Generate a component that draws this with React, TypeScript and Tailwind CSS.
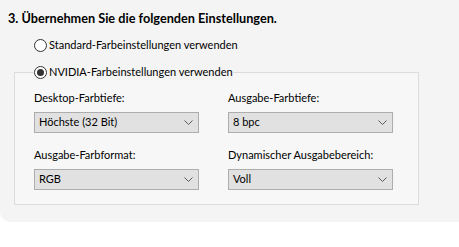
const font = { fontFamily: 'Lato, "Noto Sans", Arial, sans-serif' };

function Chevron() {
  return (
    <svg width="9" height="5" viewBox="0 0 9 5" className="shrink-0">
      <path d="M0.5 0.5 L4.5 4.5 L8.5 0.5" fill="none" stroke="#5a5a5a" strokeWidth="1" />
    </svg>
  );
}

function Select({ value }: { value: string }) {
  return (
    <div className="h-[21px] w-[165px] flex items-center justify-between pl-[4px] pr-[5px] bg-[#e1e1e1] border border-[#adadad] text-[11px] text-black">
      <span>{value}</span>
      <Chevron />
    </div>
  );
}

function Radio({ checked, label }: { checked?: boolean; label: string }) {
  return (
    <div className="flex items-center gap-[2px] h-[16px] text-[11px] text-black whitespace-nowrap">
      <span className="w-[13px] h-[13px] rounded-full border border-[#333] bg-white flex items-center justify-center">
        {checked && <span className="w-[7px] h-[7px] rounded-full bg-[#333]" />}
      </span>
      <span>{label}</span>
    </div>
  );
}

function Field({ label, value }: { label: string; value: string }) {
  return (
    <div className="flex flex-col w-[165px]">
      <div className="h-[16px] text-[11px] text-black leading-[16px] whitespace-nowrap">{label}</div>
      <div className="mt-[6px]">
        <Select value={value} />
      </div>
    </div>
  );
}

export default function App() {
  return (
    <div className="w-[459px] h-[247px] bg-white overflow-hidden" style={font}>
      <div className="h-[222px] bg-[#f4f4f4] rounded-bl-[10px] pt-[10px]">
        <div className="pl-[8px] h-[16px] text-[12.7px] leading-[16px] font-bold text-black whitespace-nowrap">
          3. Übernehmen Sie die folgenden Einstellungen.
        </div>
        <div className="pl-[34px] mt-[11px]">
          <Radio label="Standard-Farbeinstellungen verwenden" />
        </div>
        <fieldset className="ml-[14px] mt-[11px] w-[405px] h-[141px] border border-[#dcdcdc] bg-[#f7f7f7]">
          <legend className="ml-[19px] bg-[#f4f4f4]">
            <Radio checked label="NVIDIA-Farbeinstellungen verwenden" />
          </legend>
          <div className="grid grid-cols-[165px_165px] gap-x-[29px] gap-y-[14px] pl-[19px] pt-[10px]">
            <Field label="Desktop-Farbtiefe:" value="Höchste (32 Bit)" />
            <Field label="Ausgabe-Farbtiefe:" value="8 bpc" />
            <Field label="Ausgabe-Farbformat:" value="RGB" />
            <Field label="Dynamischer Ausgabebereich:" value="Voll" />
          </div>
        </fieldset>
      </div>
    </div>
  );
}
